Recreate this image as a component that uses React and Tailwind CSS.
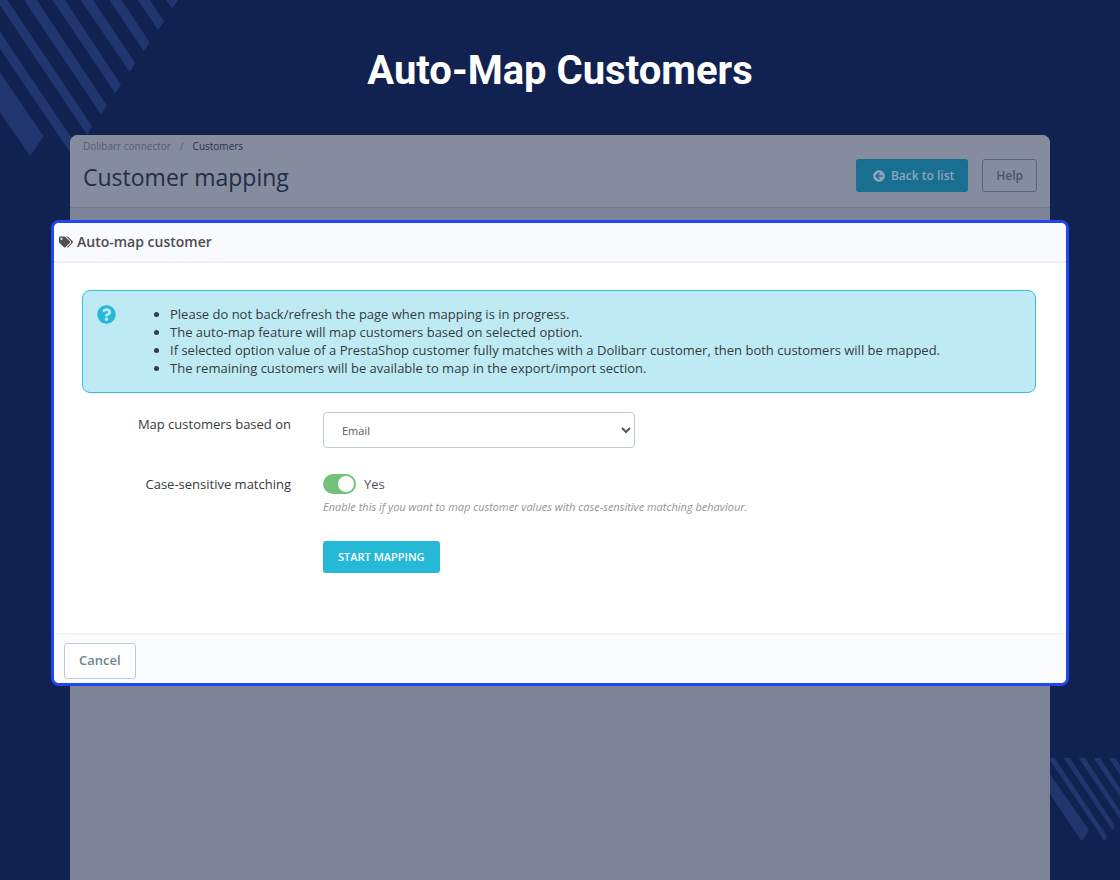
import React, { useState } from "react";
import { FaArrowCircleLeft, FaQuestionCircle, FaTags } from "react-icons/fa";

const notes = [
    "Please do not back/refresh the page when mapping is in progress.",
    "The auto-map feature will map customers based on selected option.",
    "If selected option value of a PrestaShop customer fully matches with a Dolibarr customer, then both customers will be mapped.",
    "The remaining customers will be available to map in the export/import section.",
];

// Diagonal stripes in the top left corner
function TopStripes() {
    return (
        <svg
            className="absolute left-0 top-0"
            width="180"
            height="160"
            viewBox="0 0 540 480"
            fill="#21366f"
            aria-hidden="true">
            <path d="M0 218L131 408L91 468L0 338Z" />
            <path d="M0 95L235 443L218 468L0 147Z" />
            <path d="M0 0H22L277 380L261 405L0 16Z" />
            <path d="M72 0H110L321 317L303 343Z" />
            <path d="M157 0H195L363 254L346 280Z" />
            <path d="M242 0H279L406 190L389 216Z" />
            <path d="M328 0H365L449 127L431 153Z" />
            <path d="M413 0H450L492 64L474 90Z" />
            <path d="M498 0H534L517 26Z" />
        </svg>
    );
}

// Diagonal stripes at the lower right edge
function BottomStripes() {
    return (
        <svg
            className="absolute right-0 top-[758px]"
            width="70"
            height="84"
            viewBox="0 0 210 252"
            fill="#21366f"
            aria-hidden="true">
            <path d="M0 48L117 217L95 250L0 108Z" />
            <path d="M0 0H14L172 236L164 250L0 7Z" />
            <path d="M41 0H60L195 204L187 216Z" />
            <path d="M86 0H105L218 171L210 183Z" />
            <path d="M131 0H150L240 136L232 150Z" />
            <path d="M176 0H195L240 67V95Z" />
        </svg>
    );
}

function PageHeader() {
    return (
        <header className="flex justify-between rounded-t-lg border-b border-[#727a8e] bg-[#858c9e] px-[13px] pb-3">
            <div>
                <nav
                    className="flex pt-1 text-[10px] leading-[14px]"
                    aria-label="Breadcrumb">
                    <a href="#connector" className="text-[#535d74]">
                        Dolibarr connector
                    </a>
                    <span className="px-[9px] text-[#3f6652]">/</span>
                    <span className="text-[#28324c]">Customers</span>
                </nav>
                <h2 className="mt-1.5 text-[23px] leading-9 text-[#222d48]">
                    Customer mapping
                </h2>
            </div>
            <div className="flex items-start gap-[14px] pt-6 text-xs font-semibold">
                <button
                    type="button"
                    className="flex h-[33px] items-center gap-1.5 rounded-[3px] bg-[#186f92] pl-[17px] pr-[14px] text-[#8fa5b9]">
                    <FaArrowCircleLeft className="size-3" />
                    Back to list
                </button>
                <button
                    type="button"
                    className="h-[33px] rounded-[3px] border border-[#55657c] px-[13px] text-[#46566e]">
                    Help
                </button>
            </div>
        </header>
    );
}

function AutoMapModal() {
    const [mapBy, setMapBy] = useState("email");
    const [caseSensitive, setCaseSensitive] = useState(true);

    return (
        <section
            role="dialog"
            aria-labelledby="modal-title"
            className="relative -mx-[19px] mt-3 overflow-hidden rounded-lg border-3 border-[#2148f0] bg-white text-[#363a41]">
            <div className="flex h-10 items-center gap-1 border-b-2 border-[#eaf1f2] bg-[#fafbfe] px-[5px]">
                <FaTags className="size-[14px] text-[#505050]" />
                <h3 id="modal-title" className="text-sm font-semibold text-[#4c4c4c]">
                    Auto-map customer
                </h3>
            </div>

            <form
                className="pb-[60px] pl-7 pr-[30px] pt-[27px]"
                onSubmit={(e) => e.preventDefault()}>
                <div className="flex rounded-lg border border-[#35bfda] bg-[#beeaf3] px-[14px] pb-[15px] pt-[14px]">
                    <FaQuestionCircle className="size-[19px] shrink-0 text-[#25b9d7]" />
                    <ul className="ml-[54px] list-disc text-[13px] leading-[18px]">
                        {notes.map((note) => (
                            <li key={note}>{note}</li>
                        ))}
                    </ul>
                </div>

                <div className="mt-[19px] grid grid-cols-[209px_1fr] gap-x-8 text-[13px]">
                    <label htmlFor="map-by" className="pt-0.5 text-right leading-5">
                        Map customers based on
                    </label>
                    <div>
                        <select
                            id="map-by"
                            value={mapBy}
                            onChange={(e) => setMapBy(e.target.value)}
                            className="h-9 w-full max-w-[312px] rounded border border-[#bbcdd2] bg-white pl-[14px] text-[11px] text-[#555]">
                            <option value="email">Email</option>
                            <option value="name">Name</option>
                        </select>
                    </div>

                    <label
                        htmlFor="case-sensitive"
                        className="mt-[26px] text-right leading-5">
                        Case-sensitive matching
                    </label>
                    <div className="mt-[26px]">
                        <div className="flex items-center gap-2 leading-5 text-[#505459]">
                            <input
                                id="case-sensitive"
                                type="checkbox"
                                role="switch"
                                checked={caseSensitive}
                                onChange={(e) => setCaseSensitive(e.target.checked)}
                                className="flex h-5 w-[33px] appearance-none items-center rounded-full bg-gray-300 p-0.5 before:size-4 before:rounded-full before:bg-white checked:justify-end checked:bg-[#72c279]"
                            />
                            {caseSensitive ? "Yes" : "No"}
                        </div>
                        <p className="mt-[5px] text-[11px] italic leading-4 text-[#959595]">
                            Enable this if you want to map customer values with
                            case-sensitive matching behaviour.
                        </p>
                    </div>

                    <button
                        type="submit"
                        className="col-start-2 mt-[26px] h-8 justify-self-start rounded-[3px] bg-[#25b9d7] px-[15px] text-[11px] font-semibold uppercase text-white">
                        Start mapping
                    </button>
                </div>
            </form>

            <footer className="border-t-2 border-[#f2f4f5] bg-[#fbfcfe] px-[10px] pb-1 pt-2">
                <button
                    type="button"
                    className="h-9 rounded-[3px] border border-[#bbcdd2] bg-white px-[14px] text-[13px] font-semibold text-[#6c868e]">
                    Cancel
                </button>
            </footer>
        </section>
    );
}

function App() {
    return (
        <div className="relative flex min-h-screen flex-col overflow-hidden bg-[#112150] font-['Open_Sans',sans-serif]">
            <TopStripes />
            <BottomStripes />
            <h1 className="relative pb-10 pt-[47px] text-center font-['Roboto',sans-serif] text-[40px] font-bold leading-[48px] text-white">
                Auto-Map Customers
            </h1>
            <main className="relative mx-[70px] flex-1 rounded-t-lg bg-[#7c8397]">
                <PageHeader />
                <AutoMapModal />
            </main>
        </div>
    );
}

export default App;
